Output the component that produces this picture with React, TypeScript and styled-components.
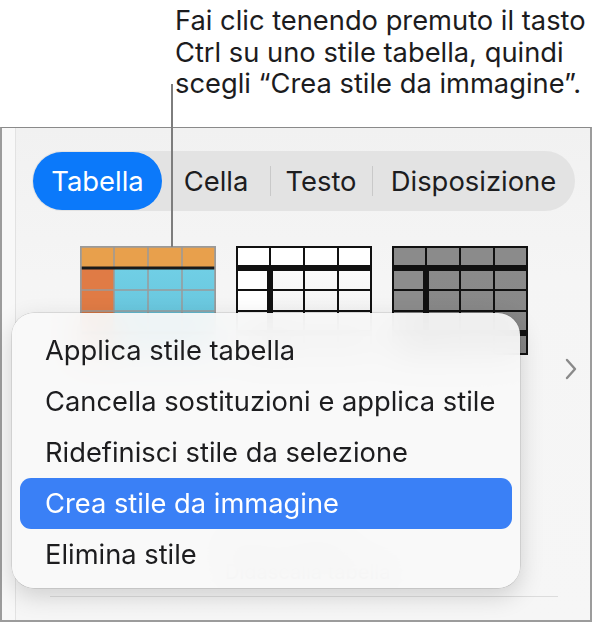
import React from "react";
import styled, { createGlobalStyle } from "styled-components";

const GlobalStyle = createGlobalStyle`
    html, body {
        margin: 0;
        padding: 0;
        background: #ffffff;
    }
    body {
        font-family: "Inter", "Noto Sans", sans-serif;
        -webkit-font-smoothing: antialiased;
    }
`;

const Page = styled.div`
    position: relative;
    width: 606px;
    height: 622px;
    overflow: hidden;
    background: #ffffff;
`;

const Callout = styled.p`
    margin: 0;
    height: 127px;
    box-sizing: border-box;
    padding: 5px 0 0 175px;
    font-size: 27.3px;
    line-height: 31.5px;
    color: #1c1c1e;
`;

const LeaderLine = styled.div`
    position: absolute;
    left: 171px;
    top: 84px;
    width: 2px;
    height: 163px;
    background: #7d7d7d;
    z-index: 2;
`;

const Panel = styled.div`
    width: 592px;
    height: 495px;
    box-sizing: border-box;
    border: 2px solid #9c9c9c;
    border-top: 1px solid #8a8a8a;
    background: #f8f8f8;
    padding-left: 13px;
`;

const Inner = styled.div`
    height: 100%;
    box-sizing: border-box;
    border-left: 1px solid #e2e2e2;
    background: linear-gradient(#f1f1f1, #f5f5f5 30%, #f6f6f6);
    display: flex;
    flex-direction: column;
    padding: 23px 0 0 16px;
`;

const Segmented = styled.div`
    display: flex;
    align-items: center;
    width: 543px;
    height: 60px;
    padding-left: 1px;
    box-sizing: border-box;
    border-radius: 30px;
    background: #e3e3e3;
`;

const Segment = styled.div<{ $width: number; $active?: boolean; $divider?: boolean }>`
    position: relative;
    width: ${props => props.$width}px;
    height: 58px;
    display: flex;
    align-items: center;
    justify-content: center;
    border-radius: 29px;
    font-size: 27.4px;
    color: ${props => (props.$active ? "#ffffff" : "#1d1d1f")};
    background: ${props => (props.$active ? "#0b79fa" : "transparent")};

    &::before {
        content: "";
        display: ${props => (props.$divider ? "block" : "none")};
        position: absolute;
        left: 0;
        top: 14px;
        bottom: 14px;
        width: 1px;
        background: #c9c9c9;
    }
`;

const ThumbRow = styled.div`
    display: flex;
    align-items: center;
    height: 254px;
    margin: 35px 0 0 48px;
`;

const ThumbGrid = styled.div`
    align-self: flex-start;
    display: grid;
    grid-template-columns: repeat(3, 136px);
    column-gap: 20px;
`;

const Chevron = styled.svg`
    margin-left: 37px;
    margin-top: -8px;
`;

const Caption = styled.div`
    margin: 35px 0 0 193px;
    font-size: 20px;
    line-height: 25px;
    color: #7a7a7a;
`;

const Separator = styled.div`
    margin: 11px 0 0 18px;
    width: 508px;
    height: 1px;
    background: #dcdcdc;
`;

const Menu = styled.div`
    position: absolute;
    left: 12px;
    top: 313px;
    width: 508px;
    height: 275px;
    box-sizing: border-box;
    padding: 12px 8px 8px;
    border-radius: 22px;
    background: rgba(249, 249, 249, 0.93);
    backdrop-filter: blur(16px);
    box-shadow: 0 0 0 0.5px rgba(0, 0, 0, 0.18), 0 8px 24px rgba(0, 0, 0, 0.16);
    z-index: 3;
`;

const MenuItem = styled.div<{ $selected?: boolean }>`
    height: 51px;
    display: flex;
    align-items: center;
    padding-left: 25px;
    border-radius: 11px;
    font-size: 27.3px;
    color: ${props => (props.$selected ? "#ffffff" : "#1d1d1f")};
    background: ${props => (props.$selected ? "#3a80f6" : "transparent")};
`;

interface ITableLook {
    header: string;
    body: string;
    bodyEnd: string;
    firstCol: string;
    line: string;
    thin: number;
    headerLine: string;
    headerWidth: number;
    columnLine: boolean;
}

const LOOKS: { [name: string]: ITableLook } = {
    colour: {
        header: "#e8a04c",
        body: "#74d3e9",
        bodyEnd: "#62bfd7",
        firstCol: "#e07b45",
        line: "#9a9a9a",
        thin: 1.5,
        headerLine: "#1a1a1a",
        headerWidth: 3,
        columnLine: false,
    },
    white: {
        header: "#ffffff",
        body: "#ffffff",
        bodyEnd: "#ececec",
        firstCol: "#ffffff",
        line: "#111111",
        thin: 2,
        headerLine: "#111111",
        headerWidth: 6,
        columnLine: true,
    },
    grey: {
        header: "#8b8b8b",
        body: "#8c8c8c",
        bodyEnd: "#858585",
        firstCol: "#8c8c8c",
        line: "#111111",
        thin: 2,
        headerLine: "#111111",
        headerWidth: 6,
        columnLine: true,
    },
};

function TableThumb(props: { look: ITableLook; id: string }) {
    const { look, id } = props;
    const cols = [34, 68, 102];
    const rows = [44, 65];

    return (
        <svg width="136" height="109" viewBox="0 0 136 109">
            <defs>
                <linearGradient id={`body-${id}`} x1="0" y1="0" x2="0" y2="1">
                    <stop offset="0" stopColor={look.body} />
                    <stop offset="1" stopColor={look.bodyEnd} />
                </linearGradient>
            </defs>
            <rect x="0" y="0" width="136" height="109" fill={`url(#body-${id})`} />
            <rect x="0" y="22" width="34" height="87" fill={look.firstCol} />
            <rect x="0" y="0" width="136" height="22" fill={look.header} />
            {cols.map(x => (
                <line key={x} x1={x} y1="0" x2={x} y2="109" stroke={look.line} strokeWidth={look.thin} />
            ))}
            {rows.map(y => (
                <line key={y} x1="0" y1={y} x2="136" y2={y} stroke={look.line} strokeWidth={look.thin} />
            ))}
            <line x1="0" y1="87" x2="136" y2="87" stroke={look.headerLine} strokeWidth={look.headerWidth} />
            <line x1="0" y1="22" x2="136" y2="22" stroke={look.headerLine} strokeWidth={look.headerWidth} />
            {look.columnLine && (
                <line x1="34" y1="22" x2="34" y2="109" stroke={look.line} strokeWidth={6} />
            )}
            <rect
                x="0.75"
                y="0.75"
                width="134.5"
                height="107.5"
                fill="none"
                stroke={look.line}
                strokeWidth={look.thin + 0.5}
            />
        </svg>
    );
}

const MENU_ITEMS = [
    "Applica stile tabella",
    "Cancella sostituzioni e applica stile",
    "Ridefinisci stile da selezione",
    "Crea stile da immagine",
    "Elimina stile",
];

const SELECTED_ITEM = 3;

function App() {
    return (
        <Page>
            <GlobalStyle />
            <Callout>
                Fai clic tenendo premuto il tasto
                <br />
                Ctrl su uno stile tabella, quindi
                <br />
                scegli “Crea stile da immagine”.
            </Callout>
            <LeaderLine />
            <Panel>
                <Inner>
                    <Segmented>
                        <Segment $width={129} $active>
                            Tabella
                        </Segment>
                        <Segment $width={108}>Cella</Segment>
                        <Segment $width={102} $divider>
                            Testo
                        </Segment>
                        <Segment $width={203} $divider>
                            Disposizione
                        </Segment>
                    </Segmented>
                    <ThumbRow>
                        <ThumbGrid>
                            <TableThumb look={LOOKS.colour} id="a" />
                            <TableThumb look={LOOKS.white} id="b" />
                            <TableThumb look={LOOKS.grey} id="c" />
                        </ThumbGrid>
                        <Chevron width="12" height="22" viewBox="0 0 12 22">
                            <path
                                d="M2 2 L10 11 L2 20"
                                fill="none"
                                stroke="#8a8a8a"
                                strokeWidth="2.4"
                                strokeLinecap="round"
                                strokeLinejoin="round"
                            />
                        </Chevron>
                    </ThumbRow>
                    <Caption>
                        Nome tabella
                        <br />
                        Didascalia tabella
                    </Caption>
                    <Separator />
                </Inner>
            </Panel>
            <Menu>
                {MENU_ITEMS.map((label, index) => (
                    <MenuItem key={label} $selected={index === SELECTED_ITEM}>
                        {label}
                    </MenuItem>
                ))}
            </Menu>
        </Page>
    );
}

export default App;
